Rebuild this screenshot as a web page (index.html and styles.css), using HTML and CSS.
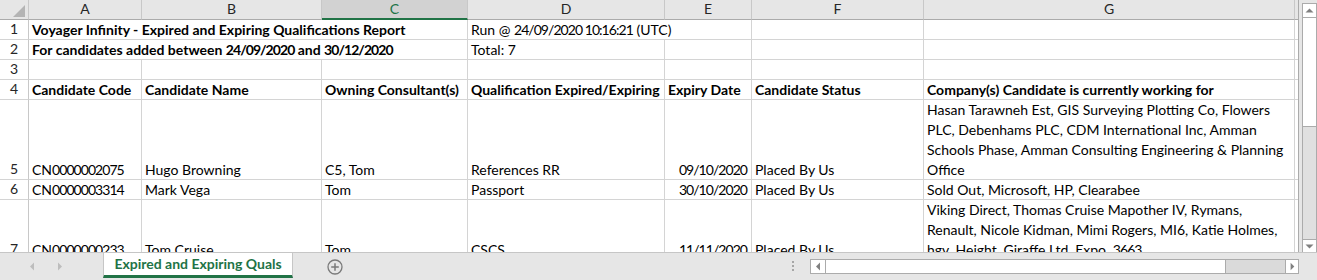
FILE: index.html
```html
<!DOCTYPE html>
<html>
<head>
<meta charset="utf-8">
<link rel="stylesheet" href="styles.css">
</head>
<body>
<div class="app">
  <div class="sheet-area">
    <div class="grid">
      <div class="h corner"><svg width="29" height="19" viewBox="0 0 29 19"><polygon points="25,5 25,17 13,17" fill="#b4b4b4"/></svg></div>
      <div class="h">A</div>
      <div class="h">B</div>
      <div class="h sel">C</div>
      <div class="h">D</div>
      <div class="h">E</div>
      <div class="h">F</div>
      <div class="h">G</div>
      <div class="h end"></div>

      <div class="r">1</div>
      <div class="c b span3"><span>Voyager Infinity - Expired and Expiring Qualifications Report</span></div>
      <div class="c span2"><span>Run @ <span class="n">24/09/2020 10:16:21</span> (UTC)</span></div>
      <div class="c"></div>
      <div class="c"></div>
      <div class="c end"></div>

      <div class="r">2</div>
      <div class="c b span3"><span>For candidates added between <span class="n">24/09/2020</span> and <span class="n">30/12/2020</span></span></div>
      <div class="c"><span>Total: 7</span></div>
      <div class="c"></div>
      <div class="c"></div>
      <div class="c"></div>
      <div class="c end"></div>

      <div class="r">3</div>
      <div class="c"></div>
      <div class="c"></div>
      <div class="c"></div>
      <div class="c"></div>
      <div class="c"></div>
      <div class="c"></div>
      <div class="c"></div>
      <div class="c end"></div>

      <div class="r">4</div>
      <div class="c b"><span>Candidate Code</span></div>
      <div class="c b"><span>Candidate Name</span></div>
      <div class="c b"><span>Owning Consultant(s)</span></div>
      <div class="c b"><span>Qualification Expired/Expiring</span></div>
      <div class="c b"><span>Expiry Date</span></div>
      <div class="c b"><span>Candidate Status</span></div>
      <div class="c b"><span>Company(s) Candidate is currently working for</span></div>
      <div class="c end"></div>

      <div class="r">5</div>
      <div class="c"><span>CN<span class="n">0000002075</span></span></div>
      <div class="c"><span>Hugo Browning</span></div>
      <div class="c"><span>C5, Tom</span></div>
      <div class="c"><span>References RR</span></div>
      <div class="c num"><span class="n">09/10/2020</span></div>
      <div class="c"><span>Placed By Us</span></div>
      <div class="c"><span class="lines"><span>Hasan Tarawneh Est, GIS Surveying Plotting Co, Flowers</span><span>PLC, Debenhams PLC, CDM International Inc, Amman</span><span>Schools Phase, Amman Consulting Engineering &amp; Planning</span><span>Office</span></span></div>
      <div class="c end"></div>

      <div class="r">6</div>
      <div class="c"><span>CN<span class="n">0000003314</span></span></div>
      <div class="c"><span>Mark Vega</span></div>
      <div class="c"><span>Tom</span></div>
      <div class="c"><span>Passport</span></div>
      <div class="c num"><span class="n">30/10/2020</span></div>
      <div class="c"><span>Placed By Us</span></div>
      <div class="c"><span>Sold Out, Microsoft, HP, Clearabee</span></div>
      <div class="c end"></div>

      <div class="r">7</div>
      <div class="c"><span>CN<span class="n">0000000233</span></span></div>
      <div class="c"><span>Tom Cruise</span></div>
      <div class="c"><span>Tom</span></div>
      <div class="c"><span>CSCS</span></div>
      <div class="c num"><span class="n">11/11/2020</span></div>
      <div class="c"><span>Placed By Us</span></div>
      <div class="c"><span class="lines"><span>Viking Direct, Thomas Cruise Mapother IV, Rymans,</span><span>Renault, Nicole Kidman, Mimi Rogers, MI6, Katie Holmes,</span><span>hgv, Height, Giraffe Ltd, Expo, <span class="n">3663</span></span></span></div>
      <div class="c end"></div>
    </div>
    <div class="vscroll">
      <div class="vbox">
        <div class="vbtn"><svg width="13" height="13" viewBox="0 0 13 13"><polygon points="2.5,8.5 10.5,8.5 6.5,4.5" fill="#808080"/></svg></div>
        <div class="vthumb"></div>
        <div class="vtrack"></div>
        <div class="vbtn down"><svg width="13" height="13" viewBox="0 0 13 13"><polygon points="2.5,4.5 10.5,4.5 6.5,8.5" fill="#808080"/></svg></div>
      </div>
    </div>
  </div>
  <div class="tabbar">
    <div class="nav">
      <svg class="arrow" width="6" height="9" viewBox="0 0 6 9"><polygon points="5,0.5 5,8.5 1,4.5" fill="#bdbdbd"/></svg>
      <svg class="arrow" width="6" height="9" viewBox="0 0 6 9"><polygon points="1,0.5 1,8.5 5,4.5" fill="#bdbdbd"/></svg>
    </div>
    <div class="tab">Expired and Expiring Quals</div>
    <div class="add"><svg width="16" height="16" viewBox="0 0 16 16"><circle cx="8" cy="8" r="7" fill="none" stroke="#7a7a7a" stroke-width="1.3"/><path d="M8 4.2V11.8M4.2 8H11.8" stroke="#7a7a7a" stroke-width="1.5"/></svg></div>
    <div class="spacer"></div>
    <div class="dots"><i></i><i></i><i></i></div>
    <div class="hscroll">
      <div class="hbtn"><svg width="14" height="13" viewBox="0 0 14 13"><polygon points="9,2.5 9,10.5 5,6.5" fill="#808080"/></svg></div>
      <div class="hthumb"></div>
      <div class="htrack"></div>
      <div class="hbtn right"><svg width="13" height="13" viewBox="0 0 13 13"><polygon points="5,2.5 5,10.5 9,6.5" fill="#808080"/></svg></div>
    </div>
  </div>
</div>
</body>
</html>
```

FILE: styles.css
```css
* {
  box-sizing: border-box;
  margin: 0;
  padding: 0;
}

body {
  margin: 0;
  width: 1317px;
  height: 280px;
  overflow: hidden;
  background: #ffffff;
  color: #000000;
  font-family: Lato, "Liberation Sans", sans-serif;
  font-size: 14px;
}

.app {
  display: flex;
  flex-direction: column;
  width: 1317px;
  height: 280px;
}

.sheet-area {
  display: flex;
  height: 252px;
  flex: none;
}

.grid {
  width: 1299px;
  height: 252px;
  overflow: hidden;
  display: grid;
  grid-template-columns: 29px 113px 180px 146px 197px 87px 172px 371px 3px;
  grid-template-rows: 20px 20px 20px 20px 20px 80px 20px 60px;
  border-right: 1px solid #ababab;
  background: #ffffff;
}

.h {
  background: #e6e6e6;
  border-right: 1px solid #c8c8c8;
  border-bottom: 1px solid #ababab;
  display: flex;
  align-items: flex-end;
  justify-content: center;
  line-height: 20px;
  color: #262626;
}

.h.sel {
  background: #d2d2d2;
  color: #217346;
  border-bottom: 2px solid #217346;
  line-height: 19px;
}

.h.end,
.c.end {
  border-right: none;
}

.corner {
  display: block;
  padding: 0;
}

.corner svg {
  display: block;
}

.r {
  background: #ffffff;
  border-right: 1px solid #c8c8c8;
  border-bottom: 1px solid #d4d4d4;
  display: flex;
  align-items: flex-end;
  justify-content: center;
  line-height: 20px;
  color: #262626;
}

.r > *,
.c > span {
  margin-bottom: -1px;
}

.c {
  border-right: 1px solid #d4d4d4;
  border-bottom: 1px solid #d4d4d4;
  display: flex;
  align-items: flex-end;
  padding: 0 2px 0 3px;
  white-space: nowrap;
  line-height: 20px;
  overflow: visible;
}

.c.b {
  font-weight: 700;
}

.c.num {
  justify-content: flex-end;
  padding-right: 3px;
}

.n {
  letter-spacing: -0.95px;
}

.c.num .n {
  margin-right: 1px;
}

.span3 {
  grid-column: span 3;
}

.span2 {
  grid-column: span 2;
}

.lines {
  display: flex;
  flex-direction: column;
}

.lines > span {
  display: block;
}

/* vertical scrollbar */
.vscroll {
  width: 18px;
  height: 252px;
  background: #e6e6e6;
  padding: 3px 0 0 3px;
}

.vbox {
  width: 15px;
  height: 250px;
  border: 1px solid #ababab;
  display: flex;
  flex-direction: column;
  background: #e0e0e0;
}

.vbtn {
  height: 13px;
  flex: none;
  background: #ffffff;
  display: flex;
}

.vbtn.down {
  border-top: 1px solid #ababab;
}

.vthumb {
  height: 110px;
  flex: none;
  background: #ffffff;
  border-top: 1px solid #ababab;
  border-bottom: 1px solid #ababab;
}

.vtrack {
  flex: 1;
}

/* sheet tabs */
.tabbar {
  height: 28px;
  flex: none;
  background: #e6e6e6;
  border-top: 1px solid #c6c6c6;
  display: flex;
  align-items: flex-start;
}

.nav {
  width: 103px;
  height: 27px;
  display: flex;
  align-items: center;
  padding-left: 29px;
  gap: 22px;
}

.arrow {
  display: block;
}

.tab {
  width: 190px;
  height: 25px;
  background: #ffffff;
  border-left: 1px solid #c6c6c6;
  border-right: 1px solid #c6c6c6;
  border-bottom: 3px solid #217346;
  color: #217346;
  font-weight: 700;
  display: flex;
  align-items: center;
  justify-content: center;
  line-height: 20px;
}

.add {
  margin-left: 34px;
  height: 27px;
  display: flex;
  align-items: center;
}

.add svg {
  display: block;
}

.spacer {
  flex: 1;
}

.dots {
  width: 2px;
  margin-top: 8px;
  margin-right: 16px;
  display: flex;
  flex-direction: column;
  gap: 2px;
}

.dots i {
  display: block;
  width: 2px;
  height: 2px;
  background: #a6a6a6;
}

.hscroll {
  width: 489px;
  height: 15px;
  margin-top: 6px;
  margin-right: 18px;
  border: 1px solid #ababab;
  background: #dadada;
  display: flex;
}

.hbtn {
  width: 14px;
  flex: none;
  background: #ffffff;
  display: flex;
}

.hbtn.right {
  width: 13px;
  border-left: 1px solid #ababab;
}

.hthumb {
  width: 401px;
  flex: none;
  background: #ffffff;
  border-left: 1px solid #ababab;
  border-right: 1px solid #ababab;
}

.htrack {
  flex: 1;
}
```
